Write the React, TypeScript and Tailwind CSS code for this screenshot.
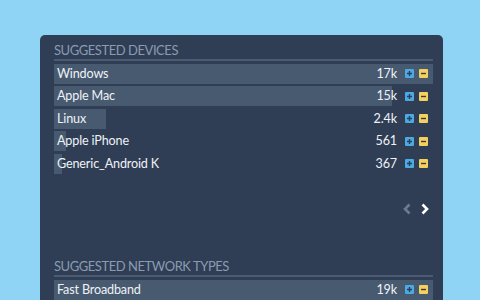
import React from "react";

type Row = { name: string; value: string; pct: number };

const devices: Row[] = [
  { name: "Windows", value: "17k", pct: 100 },
  { name: "Apple Mac", value: "15k", pct: 89.2 },
  { name: "Linux", value: "2.4k", pct: 13.7 },
  { name: "Apple iPhone", value: "561", pct: 3.2 },
  { name: "Generic_Android K", value: "367", pct: 2.1 },
];

const networks: Row[] = [{ name: "Fast Broadband", value: "19k", pct: 100 }];

function PlusBox() {
  return (
    <svg width="9" height="9" viewBox="0 0 9 9" className="block">
      <rect x="0" y="0" width="9" height="9" rx="1" fill="#4aaae4" />
      <path d="M4.5 2v5M2 4.5h5" stroke="#2c3c52" strokeWidth="1.4" />
    </svg>
  );
}

function MinusBox() {
  return (
    <svg width="9" height="9" viewBox="0 0 9 9" className="block">
      <rect x="0" y="0" width="9" height="9" rx="1" fill="#f4d15e" />
      <path d="M2 4.5h5" stroke="#3a3a3a" strokeWidth="1.4" />
    </svg>
  );
}

function DataRow({ row }: { row: Row }) {
  return (
    <div className="relative h-5 flex items-center">
      <div
        className="absolute left-0 top-0 h-full bg-[#485a70]"
        style={{ width: `${row.pct}%` }}
      />
      <span className="relative pl-[3px] text-[12.6px] tracking-[-0.15px] leading-5 text-[#eef2f6]">
        {row.name}
      </span>
      <div className="relative ml-auto flex items-center pr-[5px]">
        <span className="text-[12.6px] tracking-[-0.15px] leading-5 text-[#eef2f6]">{row.value}</span>
        <span className="ml-[8px]">
          <PlusBox />
        </span>
        <span className="ml-[5px]">
          <MinusBox />
        </span>
      </div>
    </div>
  );
}

function Title({ text }: { text: string }) {
  return (
    <div>
      <div className="h-4 text-[13px] tracking-[-0.45px] leading-4 text-[#8a9bb1]">{text}</div>
      <div className="mt-[1px] h-[2px] bg-[#4b5c72]" />
    </div>
  );
}

export default function App() {
  return (
    <div
      className="w-[480px] h-[300px] overflow-hidden bg-[#8fd4f4] pt-[35px] pl-[40px]"
      style={{ fontFamily: "Lato, 'Noto Sans', sans-serif" }}
    >
      <div className="w-[403px] h-[300px] rounded-[5px] bg-[#2f3e55] pt-[7px] pl-[14px] pr-[10px]">
        <Title text="SUGGESTED DEVICES" />
        <div className="mt-[2.5px] flex flex-col gap-[2.5px]">
          {devices.map((r) => (
            <DataRow key={r.name} row={r} />
          ))}
        </div>
        <div className="mt-[25px] h-5 flex items-center justify-end gap-[6px] pr-[3px]">
          <svg width="11" height="12" viewBox="0 0 11 12">
            <path d="M7.5 1.5L3 6l4.5 4.5" fill="none" stroke="#6c7c90" strokeWidth="2.6" />
          </svg>
          <svg width="11" height="12" viewBox="0 0 11 12">
            <path d="M3.5 1.5L8 6l-4.5 4.5" fill="none" stroke="#ffffff" strokeWidth="2.6" />
          </svg>
        </div>
        <div className="mt-[39.5px]">
          <Title text="SUGGESTED NETWORK TYPES" />
        </div>
        <div className="mt-[2.5px] flex flex-col gap-[2.5px]">
          {networks.map((r) => (
            <DataRow key={r.name} row={r} />
          ))}
        </div>
      </div>
    </div>
  );
}
